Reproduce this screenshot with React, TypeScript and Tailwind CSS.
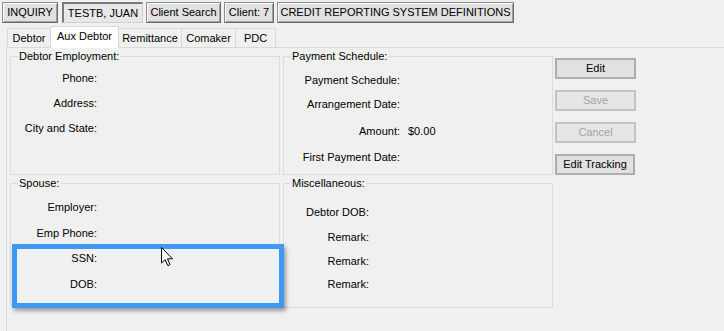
import React from "react";

const txt = "text-[11px] leading-[13px] text-black";

function Group({
  title,
  className,
  children,
}: {
  title: string;
  className: string;
  children?: React.ReactNode;
}) {
  return (
    <div className={`relative border border-[#dcdcdc] ${className}`}>
      <span className={`absolute left-[7px] top-[-7px] bg-[#f0f0f0] px-[1px] whitespace-nowrap ${txt}`}>
        {title}
      </span>
      {children}
    </div>
  );
}

function Row({
  label,
  w,
  mt,
  value,
}: {
  label: string;
  w: string;
  mt: string;
  value?: string;
}) {
  return (
    <div className={`flex ${mt}`}>
      <div className={`${w} text-right whitespace-nowrap ${txt}`}>{label}</div>
      {value && <div className={`ml-[8px] ${txt}`}>{value}</div>}
    </div>
  );
}

function TopButton({
  children,
  className,
}: {
  children: React.ReactNode;
  className: string;
}) {
  return (
    <div
      className={`h-[21px] flex items-center justify-center whitespace-nowrap bg-[#e1e1e1] border border-[#8f8f8f] border-r-[#6a6a6a] border-b-[#6a6a6a] shadow-[inset_1px_1px_0_#ffffff,inset_-1px_-1px_0_#a0a0a0] ${txt} ${className}`}
    >
      {children}
    </div>
  );
}

function SideButton({
  children,
  className,
  disabled,
}: {
  children: React.ReactNode;
  className: string;
  disabled?: boolean;
}) {
  return (
    <div
      className={`h-[21px] flex items-center justify-center whitespace-nowrap border-2 text-[11px] leading-[13px] ${
        disabled
          ? "border-[#c4c4c4] bg-[#e6e6e6] text-[#a3a3a3]"
          : "border-[#adadad] bg-[#e1e1e1] text-black"
      } ${className}`}
    >
      {children}
    </div>
  );
}

function Tab({
  children,
  className,
  selected,
}: {
  children: React.ReactNode;
  className: string;
  selected?: boolean;
}) {
  return (
    <div
      className={`text-center pt-[3px] whitespace-nowrap border-[#d9d9d9] ${txt} ${
        selected
          ? "relative z-10 h-[22px] -mb-[1px] bg-white border-l border-t border-r"
          : "h-[19px] bg-[#f0f0f0] border-t"
      } ${className}`}
    >
      {children}
    </div>
  );
}

export default function App() {
  return (
    <div className="relative w-[724px] h-[331px] overflow-hidden bg-[#f0f0f0] font-['Liberation_Sans',Arial,sans-serif]">
      {/* toolbar */}
      <div className="flex pt-[2px] pl-[2px]">
        <TopButton className="w-[56px]">INQUIRY</TopButton>
        <div
          className={`ml-[4px] w-[81px] h-[21px] flex items-center justify-center whitespace-nowrap bg-[#e8e8e8] border-t-2 border-l-2 border-[#7a7a7a] border-r border-b border-r-[#d0d0d0] border-b-[#d0d0d0] ${txt}`}
        >
          TESTB, JUAN
        </div>
        <TopButton className="ml-[3px] w-[75px]">Client Search</TopButton>
        <TopButton className="ml-[3px] w-[50px]">Client: 7</TopButton>
        <TopButton className="ml-[3px] w-[237px]">
          CREDIT REPORTING SYSTEM DEFINITIONS
        </TopButton>
      </div>

      {/* tabs */}
      <div className="flex items-end mt-[3px] ml-[7px] h-[21px]">
        <Tab className="w-[43px] border-l">Debtor</Tab>
        <Tab className="w-[69px]" selected>
          Aux Debtor
        </Tab>
        <Tab className="w-[63px] border-r">Remittance</Tab>
        <Tab className="w-[54px] border-r">Comaker</Tab>
        <Tab className="w-[40px] border-r">PDC</Tab>
      </div>

      {/* tab page */}
      <div className="ml-[6px] h-[284px] border-t border-l border-[#d9d9d9]">
        <div className="flex items-start pl-[3px] pt-[8px]">
          <div className="w-[270px] flex flex-col">
            <Group title="Debtor Employment:" className="h-[119px]">
              <Row label="Phone:" w="w-[86px]" mt="mt-[15px]" />
              <Row label="Address:" w="w-[86px]" mt="mt-[12px]" />
              <Row label="City and State:" w="w-[86px]" mt="mt-[12px]" />
            </Group>
            <Group title="Spouse:" className="mt-[8px] h-[122px]">
              <Row label="Employer:" w="w-[86px]" mt="mt-[17px]" />
              <Row label="Emp Phone:" w="w-[86px]" mt="mt-[13px]" />
              <Row label="SSN:" w="w-[86px]" mt="mt-[12px]" />
              <Row label="DOB:" w="w-[86px]" mt="mt-[13px]" />
            </Group>
          </div>

          <div className="ml-[3px] w-[270px] flex flex-col">
            <Group title="Payment Schedule:" className="h-[119px]">
              <Row label="Payment Schedule:" w="w-[116px]" mt="mt-[17px]" />
              <Row label="Arrangement Date:" w="w-[116px]" mt="mt-[11px]" />
              <Row label="Amount:" w="w-[116px]" mt="mt-[14px]" value="$0.00" />
              <Row label="First Payment Date:" w="w-[116px]" mt="mt-[13px]" />
            </Group>
            <Group title="Miscellaneous:" className="mt-[8px] h-[125px]">
              <Row label="Debtor DOB:" w="w-[85px]" mt="mt-[22px]" />
              <Row label="Remark:" w="w-[85px]" mt="mt-[12px]" />
              <Row label="Remark:" w="w-[85px]" mt="mt-[11px]" />
              <Row label="Remark:" w="w-[85px]" mt="mt-[10px]" />
            </Group>
          </div>

          <div className="ml-[2px] mt-[2px] flex flex-col gap-[11px]">
            <SideButton className="w-[81px]">Edit</SideButton>
            <SideButton className="w-[81px]" disabled>
              Save
            </SideButton>
            <SideButton className="w-[81px]" disabled>
              Cancel
            </SideButton>
            <SideButton className="w-[80px]">Edit Tracking</SideButton>
          </div>
        </div>
      </div>

      {/* highlight overlay */}
      <div className="absolute left-[12px] top-[244px] w-[272px] h-[64px] border-[5px] border-[#3d99f5] shadow-[2px_3px_4px_rgba(0,0,0,0.35)]" />

      {/* mouse cursor */}
      <svg
        className="absolute left-[161px] top-[247px]"
        width="13"
        height="20"
        viewBox="0 0 13 20"
      >
        <path
          d="M0.5 0.5 L0.5 16 L4.2 12.6 L6.8 18.6 L9 17.6 L6.5 11.8 L11.5 11.8 Z"
          fill="#ffffff"
          stroke="#000000"
          strokeWidth="1"
          strokeLinejoin="miter"
        />
      </svg>
    </div>
  );
}
